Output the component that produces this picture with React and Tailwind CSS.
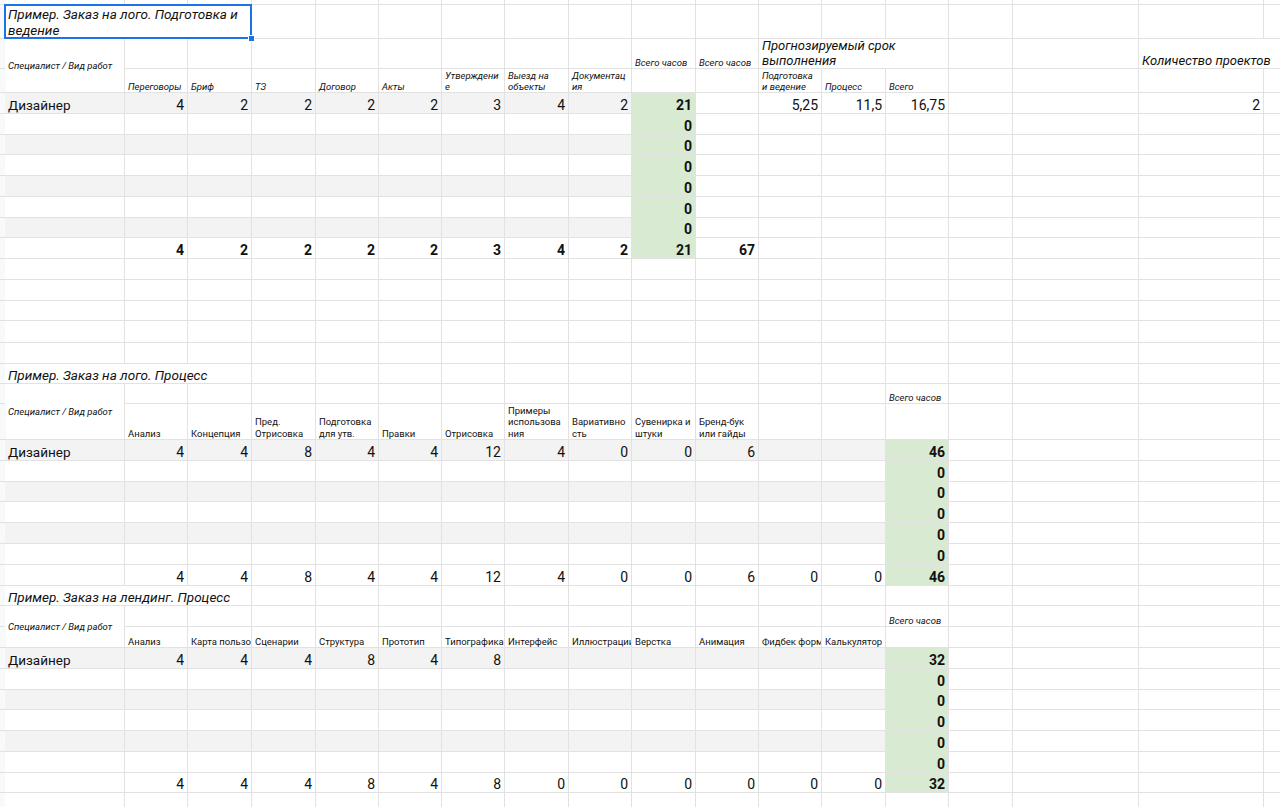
import React from 'react';

const GREEN = 'bg-[#d9ead3]';
const GRAY = 'bg-[#f3f3f3]';

// how each kind of cell lays out its text
const KIND = {
  blank: '',
  num: 'justify-end items-end text-[14px] leading-[16px]',
  numb: 'justify-end items-end text-[14px] leading-[16px] font-bold',
  name: 'items-end text-[13.5px] leading-[16px]',
  title: 'flex-col justify-end italic text-[13.5px] leading-[16px]',
  hdr: 'flex-col justify-end italic text-[9.5px] leading-[11px]',
  lbl: 'flex-col justify-end text-[9.5px] leading-[11.5px]',
  spec: 'items-center italic text-[9.5px] leading-[12px]',
  big: 'flex-col justify-end italic text-[13px] leading-[15px]',
};

const COL_SPAN = { 1: '', 2: 'col-span-2', 3: 'col-span-3' };
const ROW_SPAN = { 1: '', 2: 'row-span-2' };

function buildCells() {
  const cells = {};
  const put = (r, c, cell) => {
    cells[r + '-' + c] = cell;
  };
  const row = (r, start, values, kind) =>
    values.forEach((v, i) => put(r, start + i, { kind, text: v }));

  // Подготовка и ведение
  put(1, 1, { kind: 'title', text: ['Пример. Заказ на лого. Подготовка и', 'ведение'], cs: 3, selected: true });
  put(2, 1, { kind: 'spec', text: 'Специалист / Вид работ', rs: 2 });
  put(2, 10, { kind: 'hdr', text: ['Всего часов'] });
  put(2, 11, { kind: 'hdr', text: ['Всего часов'] });
  put(2, 12, { kind: 'big', text: ['Прогнозируемый срок', 'выполнения'], cs: 3 });
  put(2, 17, { kind: 'big', text: ['Количество проектов'], cs: 2 });
  row(3, 2, [
    ['Переговоры'], ['Бриф'], ['ТЗ'], ['Договор'], ['Акты'],
    ['Утверждени', 'е'], ['Выезд на', 'объекты'], ['Документац', 'ия'],
  ], 'hdr');
  row(3, 12, [['Подготовка', 'и ведение'], ['Процесс'], ['Всего']], 'hdr');
  put(4, 1, { kind: 'name', text: 'Дизайнер' });
  row(4, 2, [4, 2, 2, 2, 2, 3, 4, 2], 'num');
  put(4, 10, { kind: 'numb', text: 21 });
  row(4, 12, ['5,25', '11,5', '16,75'], 'num');
  put(4, 17, { kind: 'num', text: 2 });
  for (let r = 5; r <= 10; r++) put(r, 10, { kind: 'numb', text: 0 });
  row(11, 2, [4, 2, 2, 2, 2, 3, 4, 2, 21, 67], 'numb');

  // Логотип, процесс
  put(17, 1, { kind: 'title', text: ['Пример. Заказ на лого. Процесс'], cs: 3 });
  put(18, 1, { kind: 'spec', text: 'Специалист / Вид работ', rs: 2 });
  put(18, 14, { kind: 'hdr', text: ['Всего часов'] });
  row(19, 2, [
    ['Анализ'], ['Концепция'], ['Пред.', 'Отрисовка'], ['Подготовка', 'для утв.'], ['Правки'],
    ['Отрисовка'], ['Примеры', 'использова', 'ния'], ['Вариативно', 'сть'], ['Сувенирка и', 'штуки'],
    ['Бренд-бук', 'или гайды'],
  ], 'lbl');
  put(20, 1, { kind: 'name', text: 'Дизайнер' });
  row(20, 2, [4, 4, 8, 4, 4, 12, 4, 0, 0, 6], 'num');
  put(20, 14, { kind: 'numb', text: 46 });
  for (let r = 21; r <= 25; r++) put(r, 14, { kind: 'numb', text: 0 });
  row(26, 2, [4, 4, 8, 4, 4, 12, 4, 0, 0, 6, 0, 0], 'num');
  put(26, 14, { kind: 'numb', text: 46 });

  // Лендинг, процесс
  put(27, 1, { kind: 'title', text: ['Пример. Заказ на лендинг. Процесс'], cs: 3 });
  put(28, 1, { kind: 'spec', text: 'Специалист / Вид работ', rs: 2 });
  put(28, 14, { kind: 'hdr', text: ['Всего часов'] });
  row(29, 2, [
    ['Анализ'], ['Карта пользователя'], ['Сценарии'], ['Структура'], ['Прототип'], ['Типографика'],
    ['Интерфейс'], ['Иллюстрации'], ['Верстка'], ['Анимация'], ['Фидбек форма'], ['Калькулятор'],
  ], 'lbl');
  put(30, 1, { kind: 'name', text: 'Дизайнер' });
  row(30, 2, [4, 4, 4, 8, 4, 8], 'num');
  put(30, 14, { kind: 'numb', text: 32 });
  for (let r = 31; r <= 35; r++) put(r, 14, { kind: 'numb', text: 0 });
  row(36, 2, [4, 4, 4, 8, 4, 8, 0, 0, 0, 0, 0, 0], 'num');
  put(36, 14, { kind: 'numb', text: 32 });

  return cells;
}

function bgFor(r, c) {
  if (c === 0) return 'bg-[#f8f9fa]';
  if (r >= 4 && r <= 11) {
    if (c === 10) return GREEN;
    if (c <= 9 && r % 2 === 0 && r < 11) return GRAY;
  }
  if ((r >= 20 && r <= 26) || (r >= 30 && r <= 36)) {
    if (c === 14) return GREEN;
    if (c <= 13 && r % 2 === 0 && r !== 26 && r !== 36) return GRAY;
  }
  return 'bg-white';
}

const ROWS = 38;
const COLS = 19;

function Cell({ cell, bg }) {
  const kind = cell ? cell.kind : 'blank';
  const span = cell ? `${COL_SPAN[cell.cs || 1]} ${ROW_SPAN[cell.rs || 1]}` : '';
  const lines = cell && Array.isArray(cell.text);
  return (
    <div
      className={`${span} ${bg} ${KIND[kind]} flex min-w-0 px-[3px] text-[#111] ${
        cell && cell.selected ? 'relative z-10' : 'overflow-hidden'
      }`}
    >
      {lines
        ? cell.text.map((t, i) => (
            <div key={i} className="whitespace-nowrap">
              {t}
            </div>
          ))
        : cell && <span className="whitespace-nowrap">{cell.text}</span>}
      {cell && cell.selected && (
        <>
          <div className="absolute -left-[1px] -top-[1px] -right-[1px] -bottom-[1px] border-2 border-[#1a73e8]" />
          <div className="absolute -right-[4px] -bottom-[4px] w-[7px] h-[7px] bg-[#1a73e8] border border-white" />
        </>
      )}
    </div>
  );
}

export default function App() {
  const cells = buildCells();
  const covered = new Set();
  const out = [];
  for (let r = 0; r < ROWS; r++) {
    for (let c = 0; c < COLS; c++) {
      const key = r + '-' + c;
      if (covered.has(key)) continue;
      const cell = cells[key];
      if (cell) {
        for (let dr = 0; dr < (cell.rs || 1); dr++)
          for (let dc = 0; dc < (cell.cs || 1); dc++) covered.add(r + dr + '-' + (c + dc));
      }
      out.push(<Cell key={key} cell={cell} bg={bgFor(r, c)} />);
    }
  }

  return (
    <div className="w-[1280px] h-[807px] overflow-hidden bg-white font-['Roboto','Liberation_Sans',Arial,sans-serif]">
      <div className="grid w-max gap-px bg-[#e2e2e2] grid-cols-[4px_119px_62px_63px_63px_62px_62px_62px_63px_62px_63px_62px_62px_63px_62px_63px_125px_124px_100px] grid-rows-[4px_33px_29px_23px_20px_20px_19px_20px_20px_20px_19px_20px_20px_20px_19px_21px_20px_19px_19px_35px_20px_20px_19px_20px_20px_20px_20px_19px_20px_20px_20px_20px_19px_20px_20px_20px_19px_20px]">
        {out}
      </div>
    </div>
  );
}
